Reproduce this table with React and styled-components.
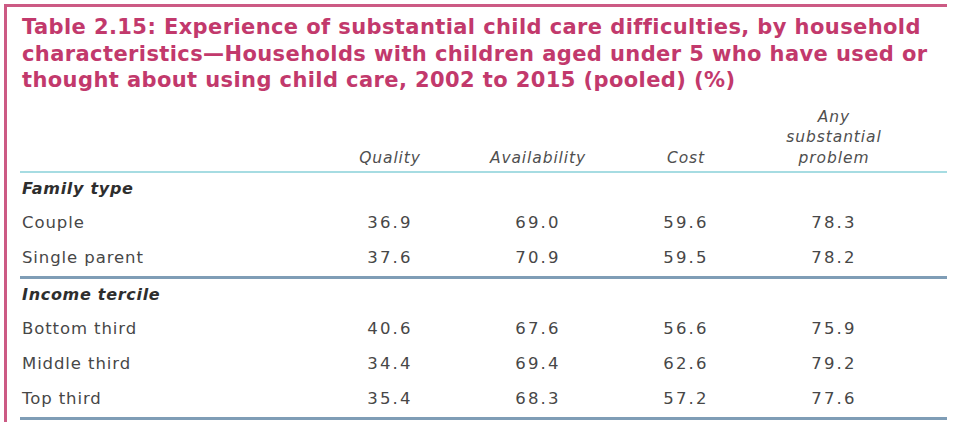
import React from "react";
import styled, { createGlobalStyle } from "styled-components";

const GlobalStyle = createGlobalStyle`
  html, body {
    margin: 0;
    padding: 0;
    background: #ffffff;
  }
`;

const Frame = styled.div`
  margin: 4px 0 0 4px;
  width: 943px;
  height: 418px;
  box-sizing: border-box;
  border-top: 3px solid #cc5a84;
  border-left: 3px solid #cc5a84;
  overflow: hidden;
`;

const Title = styled.h1`
  margin: 0;
  padding: 7px 0 0 15px;
  font-family: "DejaVu Sans", Verdana, sans-serif;
  font-weight: 700;
  font-size: 21px;
  line-height: 26.5px;
  color: #c2396c;
  letter-spacing: 0.4px;
  white-space: nowrap;
`;

const Table = styled.div`
  margin: 13px 0 0 13px;
  font-family: "DejaVu Sans", Verdana, sans-serif;
  color: #474747;
`;

const Row = styled.div`
  display: grid;
  grid-template-columns: 296px repeat(4, 148px) 1fr;
  align-items: ${(p) => (p.$head ? "end" : "center")};
  box-sizing: border-box;
  height: ${(p) => p.$h}px;
  border-bottom: ${(p) => p.$line || "none"};
  line-height: 18px;
`;

const HeadCell = styled.div`
  text-align: center;
  font-style: italic;
  font-size: 15.5px;
  line-height: 20.5px;
  letter-spacing: 0.9px;
  color: #4f4f4f;
  padding-bottom: 3px;
`;

const GroupLabel = styled.div`
  padding-left: 2px;
  font-weight: 700;
  font-style: italic;
  font-size: 16px;
  letter-spacing: 0.7px;
  color: #2e2e2e;
`;

const Label = styled.div`
  padding-left: 2px;
  font-size: 16.5px;
  letter-spacing: 0.9px;
`;

const Num = styled.div`
  text-align: center;
  font-size: 16.5px;
  letter-spacing: 2.2px;
`;

const columns = ["Quality", "Availability", "Cost"];

const groups = [
  {
    name: "Family type",
    rows: [
      ["Couple", "36.9", "69.0", "59.6", "78.3"],
      ["Single parent", "37.6", "70.9", "59.5", "78.2"],
    ],
  },
  {
    name: "Income tercile",
    rows: [
      ["Bottom third", "40.6", "67.6", "56.6", "75.9"],
      ["Middle third", "34.4", "69.4", "62.6", "79.2"],
      ["Top third", "35.4", "68.3", "57.2", "77.6"],
    ],
  },
];

function App() {
  return (
    <>
      <GlobalStyle />
      <Frame>
        <Title>
          Table 2.15: Experience of substantial child care difficulties, by household
          <br />
          characteristics—Households with children aged under 5 who have used or
          <br />
          thought about using child care, 2002 to 2015 (pooled) (%)
        </Title>
        <Table>
          <Row $head $h={66} $line="2px solid #a6dce2">
            <div />
            {columns.map((c) => (
              <HeadCell key={c}>{c}</HeadCell>
            ))}
            <HeadCell>
              Any
              <br />
              substantial
              <br />
              problem
            </HeadCell>
          </Row>
          {groups.map((g) => (
            <div key={g.name}>
              <Row $h={33}>
                <GroupLabel>{g.name}</GroupLabel>
              </Row>
              {g.rows.map((r, i) => {
                const last = i === g.rows.length - 1;
                return (
                  <Row
                    key={r[0]}
                    $h={last ? 38 : 35}
                    $line={last ? "3px solid #7f9db6" : "none"}
                  >
                    <Label>{r[0]}</Label>
                    {r.slice(1).map((v, j) => (
                      <Num key={j}>{v}</Num>
                    ))}
                  </Row>
                );
              })}
            </div>
          ))}
        </Table>
      </Frame>
    </>
  );
}

export default App;
